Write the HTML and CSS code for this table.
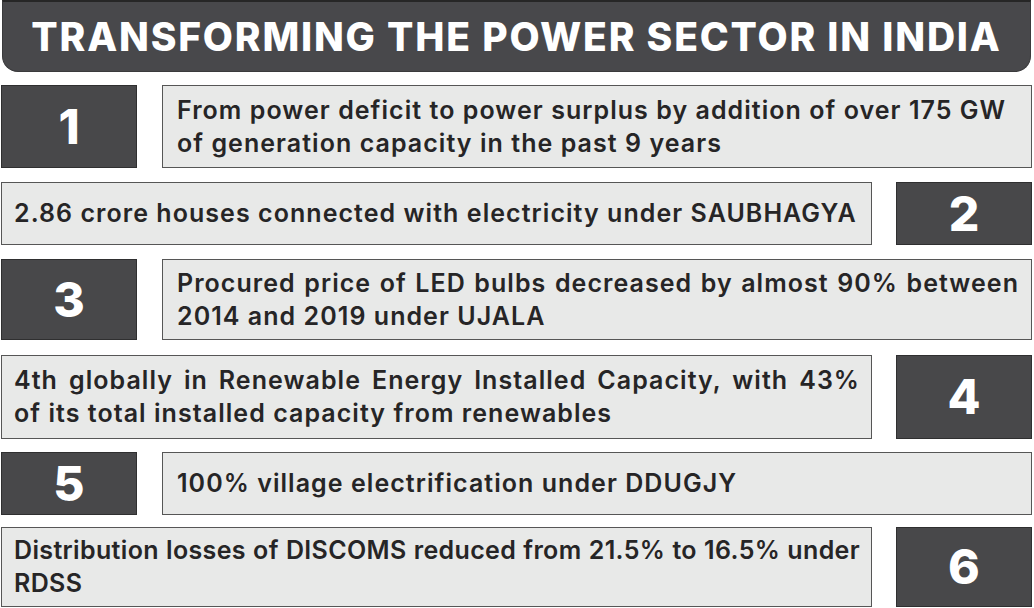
FILE: index.html
```html
<!DOCTYPE html>
<html lang="en">
<head>
<meta charset="utf-8">
<title>Transforming the Power Sector in India</title>
<link rel="stylesheet" href="styles.css">
</head>
<body>
<div class="page">
  <header class="banner"><h1 class="title">TRANSFORMING THE POWER SECTOR IN INDIA</h1></header>

  <div class="row row-left tall r1">
    <div class="num">1</div>
    <div class="text"><span class="ln">From power deficit to power surplus by addition of over 175 GW</span><span class="ln">of generation capacity in the past 9 years</span></div>
  </div>

  <div class="row row-right short r2">
    <div class="text"><span class="ln">2.86 crore houses connected with electricity under SAUBHAGYA</span></div>
    <div class="num">2</div>
  </div>

  <div class="row row-left tall r3">
    <div class="num">3</div>
    <div class="text"><span class="ln just">Procured price of LED bulbs decreased by almost 90% between</span><span class="ln">2014 and 2019 under UJALA</span></div>
  </div>

  <div class="row row-right tall r4">
    <div class="text"><span class="ln just">4th globally in Renewable Energy Installed Capacity, with 43%</span><span class="ln">of its total installed capacity from renewables</span></div>
    <div class="num">4</div>
  </div>

  <div class="row row-left short r5">
    <div class="num">5</div>
    <div class="text"><span class="ln">100% village electrification under DDUGJY</span></div>
  </div>

  <div class="row row-right tall r6">
    <div class="text"><span class="ln just">Distribution losses of DISCOMS reduced from 21.5% to 16.5% under</span><span class="ln">RDSS</span></div>
    <div class="num">6</div>
  </div>
</div>
</body>
</html>
```
FILE: styles.css
```css
* { box-sizing: border-box; }
html, body { margin: 0; padding: 0; background: #ffffff; }
body { width: 1034px; height: 608px; overflow: hidden; font-family: Inter, "Open Sans", "Liberation Sans", sans-serif; }

.page {
  padding: 0 2px 0 1px;
  display: flex;
  flex-direction: column;
}

.banner {
  margin: 0 1px 0 1px;
  height: 72px;
  background: #48484b;
  border-top: 2px solid #262626;
  border-left: 1px solid #3a3a3c;
  border-right: 1px solid #3a3a3c;
  border-bottom: 1px solid #3a3a3c;
  border-radius: 0 0 16px 16px;
  display: flex;
  align-items: center;
  justify-content: center;
}
.title {
  margin: 0;
  color: #ffffff;
  font-family: Inter, "Open Sans", sans-serif;
  font-weight: 800;
  font-size: 39px;
  letter-spacing: 1.8px;
  line-height: 1;
  white-space: nowrap;
}

.row { display: grid; }
.row-left { grid-template-columns: 136px minmax(0, 1fr); column-gap: 25px; }
.row-right { grid-template-columns: minmax(0, 1fr) 136px; column-gap: 24px; }
.tall { height: 83px; }
.short { height: 63px; }
.r1 { margin-top: 13px; }
.r2 { margin-top: 14px; }
.r3 { margin-top: 14px; height: 81px; }
.r4 { margin-top: 15px; height: 84px; }
.r5 { margin-top: 13px; }
.r6 { margin-top: 12px; height: 80px; }

.num {
  background: #48484a;
  border: 1px solid #2f2f30;
  color: #ffffff;
  font-weight: 800;
  font-size: 48px;
  line-height: 1;
  display: flex;
  align-items: center;
  justify-content: center;
}

.text {
  background: #e8e9e8;
  border: 1px solid #565656;
  color: #262526;
  font-weight: 600;
  font-size: 25px;
  letter-spacing: 1.05px;
  line-height: 33px;
  display: flex;
  flex-direction: column;
  justify-content: center;
  padding: 0 12px 0 14px;
}
.row-right .text { padding: 0 11px 0 12px; }
.r6 .text { letter-spacing: 0.35px; }

.ln { display: block; text-align: left; }
.ln.just { text-align: justify; text-align-last: justify; white-space: nowrap; }
```
